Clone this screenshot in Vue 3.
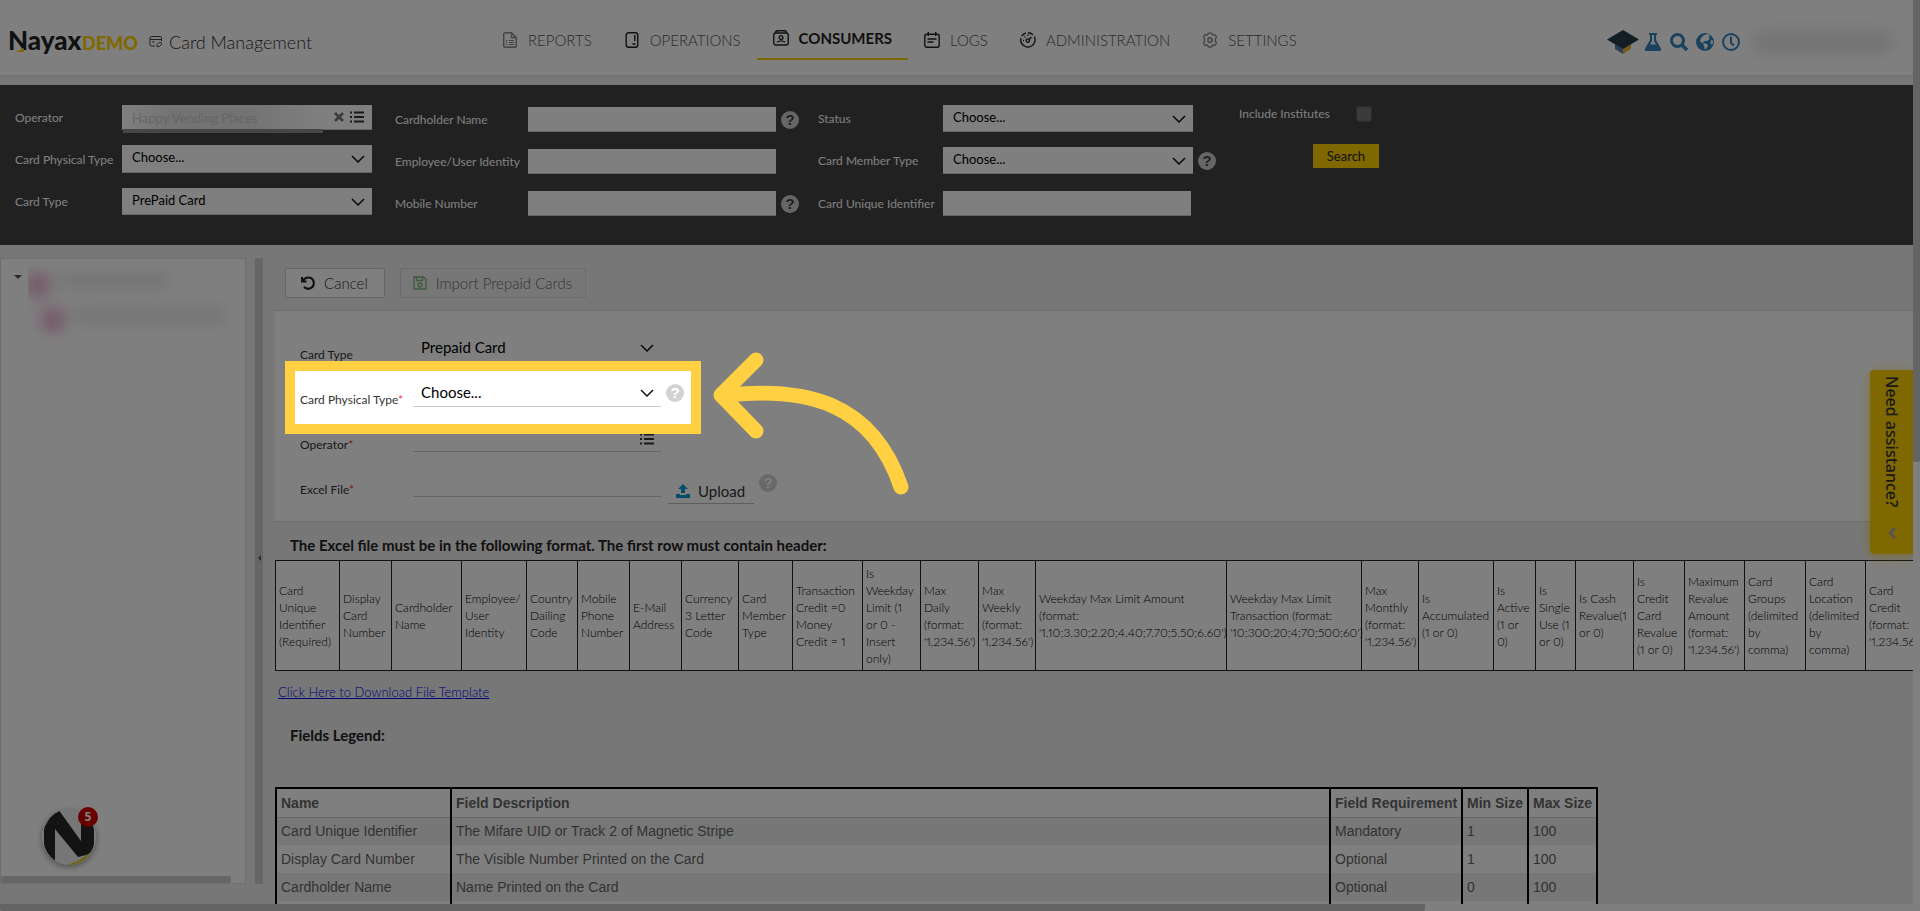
<script setup>
import { ref } from 'vue'

const nav = [
  { label: 'REPORTS', icon: 'report', tone: 'soft' },
  { label: 'OPERATIONS', icon: 'device', tone: 'strong' },
  { label: 'CONSUMERS', icon: 'badge', tone: 'strong', active: true },
  { label: 'LOGS', icon: 'log', tone: 'strong' },
  { label: 'ADMINISTRATION', icon: 'gauge', tone: 'strong' },
  { label: 'SETTINGS', icon: 'gear', tone: 'soft' },
]

const columns = [
  ['Card\nUnique\nIdentifier\n(Required)', 64],
  ['Display\nCard\nNumber', 52],
  ['Cardholder\nName', 70],
  ['Employee/\nUser\nIdentity', 65],
  ['Country\nDailing\nCode', 51],
  ['Mobile\nPhone\nNumber', 52],
  ['E-Mail\nAddress', 52],
  ['Currency\n3 Letter\nCode', 57],
  ['Card\nMember\nType', 54],
  ['Transaction\nCredit =0\nMoney\nCredit = 1', 70],
  ['Is\nWeekday\nLimit (1\nor 0 -\nInsert\nonly)', 58],
  ["Max\nDaily\n(format:\n'1,234.56')", 58],
  ["Max\nWeekly\n(format:\n'1,234.56')", 57],
  ["Weekday Max Limit Amount\n(format:\n'1.10;3.30;2.20;4.40;7.70;5.50;6.60')", 191],
  ["Weekday Max Limit\nTransaction (format:\n'10;300;20;4;70;500;60')", 135],
  ["Max\nMonthly\n(format:\n'1,234.56')", 57],
  ['Is\nAccumulated\n(1 or 0)', 75],
  ['Is\nActive\n(1 or\n0)', 42],
  ['Is\nSingle\nUse (1\nor 0)', 40],
  ['Is Cash\nRevalue(1\nor 0)', 58],
  ['Is\nCredit\nCard\nRevalue\n(1 or 0)', 51],
  ["Maximum\nRevalue\nAmount\n(format:\n'1,234.56')", 60],
  ['Card\nGroups\n(delimited\nby\ncomma)', 61],
  ['Card\nLocation\n(delimited\nby\ncomma)', 60],
  ["Card\nCredit\n(format:\n'1,234.56')", 60],
]
const totalWidth = columns.reduce((sum, c) => sum + c[1], 0)

const legend = [
  ['Card Unique Identifier', 'The Mifare UID or Track 2 of Magnetic Stripe', 'Mandatory', '1', '100'],
  ['Display Card Number', 'The Visible Number Printed on the Card', 'Optional', '1', '100'],
  ['Cardholder Name', 'Name Printed on the Card', 'Optional', '0', '100'],
]

const operator = ref('Happy Vending Places')
const includeInstitutes = ref(false)
</script>

<template>
  <div class="page">
    <header class="top">
      <div class="brand">
        <a class="logo" href="#" aria-label="Nayax Demo">
          <span class="logo-name">Nayax</span><span class="logo-demo">DEMO</span>
          <svg class="logo-mark" viewBox="0 0 8 4" aria-hidden="true"><path d="M0 4 L8 0 V4Z" fill="#ffd000" /></svg>
        </a>
        <svg class="card-icon" viewBox="0 0 14 14" fill="none" stroke="#444" aria-hidden="true">
          <path d="M6 11H2.500Q1 11 1 9.500V3Q1 1.500 2.500 1.500H11Q12.500 1.500 12.500 3V6M1 4.500H12.500M3 7H5.500" />
          <path d="M8 11.500V9.500L11 7L13 8.500L10.500 11.500Z" />
        </svg>
        <h1>Card Management</h1>
      </div>
      <nav class="nav">
        <a v-for="n in nav" :key="n.label" href="#" :class="['nav-item', n.tone, { active: n.active }]">
          <svg viewBox="0 0 16 16" fill="none" stroke="currentColor" stroke-width="1.4" aria-hidden="true">
            <template v-if="n.icon === 'report'">
              <path d="M9 .7H3.500Q1.700 .7 1.700 2.500V13.500Q1.700 15.300 3.500 15.300H12.500Q14.300 15.300 14.300 13.500V5.500L9.500 .7V5.500H14.300" />
              <path d="M4 8.500H5.500M7 8.500H12M4 10.500H5.500M7 10.500H12M4 12.500H5.500M7 12.500H12" stroke-width="1" />
            </template>
            <template v-else-if="n.icon === 'device'">
              <rect x="2.200" y=".8" width="11.600" height="14.400" rx="2.500" />
              <path d="M10.800 3V9M8.500 12H11.500" />
            </template>
            <template v-else-if="n.icon === 'badge'">
              <rect x=".8" y="3" width="14.400" height="12" rx="2" />
              <path d="M2.500 3Q2.500 .8 4.500 .8H11.500Q13.500 .8 13.500 3M4 12.300Q8 9.500 12 12.300" />
              <circle cx="8" cy="7.500" r="1.900" />
            </template>
            <template v-else-if="n.icon === 'log'">
              <rect x=".8" y="2.300" width="14.400" height="13" rx="2" />
              <path d="M4.300 0V4M11.700 0V4M3.500 7H12.500M3.500 10H9.500" />
            </template>
            <template v-else-if="n.icon === 'gauge'">
              <path d="M4.500 14A7.200 7.200 0 0 1 1 6M1.800 4.200A7.200 7.200 0 0 1 6 1M8 .8A7.200 7.200 0 0 1 13 2.800M14.300 4.500A7.200 7.200 0 0 1 11.500 14M4.500 14Q8 16.200 11.500 14" />
              <circle cx="7.800" cy="8.600" r="1.700" />
              <path d="M9 7.400L11.500 5M3 8.500H4M8 2.500V4M4.500 4.500L5.300 5.300" />
            </template>
            <template v-else>
              <circle cx="8" cy="8" r="2.200" />
              <path d="M5.800 2.500Q5.800 .9 8 .9T10.200 2.500Q11.500 3.300 12.600 2.600Q14 3 14.500 5.300Q13.300 6.300 13.300 8T14.500 10.700Q14 13 12.600 13.400Q11.500 12.700 10.200 13.500Q10.200 15.100 8 15.100T5.800 13.500Q4.500 12.700 3.400 13.400Q2 13 1.500 10.700Q2.700 9.700 2.700 8T1.500 5.300Q2 3 3.400 2.600Q4.500 3.300 5.800 2.500Z" />
            </template>
          </svg>
          <span>{{ n.label }}</span>
        </a>
      </nav>
      <div class="tools">
        <button type="button" class="tool cap" aria-label="Academy">
          <svg viewBox="0 0 32 24"><path d="M8 13L16 19V24L8 19Z" fill="#5a7ea8" /><path d="M24 13L16 19V24L24 19Z" fill="#e8b83a" /><path d="M16 0L32 9.500L16 19L0 9.500Z" fill="#263d49" /></svg>
        </button>
        <button type="button" class="tool" aria-label="Lab">
          <svg viewBox="0 0 18 18"><path fill-rule="evenodd" d="M5 0H13V2H12V7L17 15.500Q17.500 18 15.500 18H2.500Q.5 18 1 15.500L6 7V2H5ZM8 2V8L6 11.500H12L10 8V2Z" fill="#3384bd" /></svg>
        </button>
        <button type="button" class="tool" aria-label="Search">
          <svg viewBox="0 0 18 18" fill="none" stroke="#3384bd"><circle cx="7.500" cy="7.500" r="6" stroke-width="3" /><path d="M12 12L17 17" stroke-width="3.500" /></svg>
        </button>
        <button type="button" class="tool" aria-label="Language">
          <svg viewBox="0 0 18 18"><circle cx="9" cy="9" r="9" fill="#3384bd" /><path d="M8 2L12 1L14 3L12.500 5L14 6L11 8L9 8L6 10L4 8L5 5ZM15 7L17.500 8L16 12L14.500 10ZM7 10L11 11L12 13L9 17L8 13Z" fill="#fff" /></svg>
        </button>
        <button type="button" class="tool" aria-label="Recent">
          <svg viewBox="0 0 18 18" fill="none" stroke="#3384bd"><circle cx="9" cy="9" r="8" stroke-width="2" /><path d="M9 3.500V10L12 12.500" stroke-width="2" /></svg>
        </button>
        <div class="user-blur"></div>
      </div>
    </header>

    <form class="filters" @submit.prevent>
      <div class="fcol first">
        <div class="frow">
          <label for="f-op">Operator</label>
          <div class="box short">
            <input id="f-op" v-model="operator" class="masked" type="text">
            <span class="smear"></span>
            <div class="box-tools">
              <button type="button" aria-label="Clear"><svg viewBox="0 0 10 10"><path d="M1 1L9 9M9 1L1 9" stroke="#777" stroke-width="2.500" /></svg></button>
              <button type="button" aria-label="List"><svg class="list" viewBox="0 0 14 12"><path d="M0 1.500H2M0 6H2M0 10.500H2M4 1.500H14M4 6H14M4 10.500H14" stroke="#333" stroke-width="1.800" /></svg></button>
            </div>
          </div>
        </div>
        <div class="frow">
          <label for="f-phys">Card Physical Type</label>
          <div class="box tall"><select id="f-phys"><option>Choose...</option></select><svg class="chev" viewBox="0 0 14 8"><path d="M1 1L7 7L13 1" /></svg></div>
        </div>
        <div class="frow">
          <label for="f-type">Card Type</label>
          <div class="box"><select id="f-type"><option>PrePaid Card</option></select><svg class="chev" viewBox="0 0 14 8"><path d="M1 1L7 7L13 1" /></svg></div>
        </div>
      </div>

      <div class="fcol second">
        <div class="frow">
          <label for="f-name">Cardholder Name</label><input id="f-name" class="plain" type="text">
          <button type="button" class="help" aria-label="Help">?</button>
        </div>
        <div class="frow"><label for="f-emp">Employee/User Identity</label><input id="f-emp" class="plain" type="text"></div>
        <div class="frow">
          <label for="f-mob">Mobile Number</label><input id="f-mob" class="plain" type="text">
          <button type="button" class="help" aria-label="Help">?</button>
        </div>
      </div>

      <div class="fcol third">
        <div class="frow">
          <label for="f-status">Status</label>
          <div class="box"><select id="f-status"><option>Choose...</option></select><svg class="chev" viewBox="0 0 14 8"><path d="M1 1L7 7L13 1" /></svg></div>
        </div>
        <div class="frow">
          <label for="f-member">Card Member Type</label>
          <div class="box"><select id="f-member"><option>Choose...</option></select><svg class="chev" viewBox="0 0 14 8"><path d="M1 1L7 7L13 1" /></svg></div>
          <button type="button" class="help" aria-label="Help">?</button>
        </div>
        <div class="frow last"><label for="f-uid">Card Unique Identifier</label><input id="f-uid" class="plain" type="text"></div>
      </div>

      <div class="fcol fourth">
        <div class="check-row">
          <label for="f-inst">Include Institutes</label>
          <input id="f-inst" v-model="includeInstitutes" type="checkbox">
        </div>
        <button type="submit" class="search">Search</button>
      </div>
    </form>

    <div class="body">
      <aside class="tree">
        <span class="caret"></span>
        <div class="tree-blur">
          <div class="smudge"><i></i><b></b></div>
          <div class="smudge child"><i></i><b></b></div>
        </div>
        <div class="tree-scroll"></div>
        <button type="button" class="chat" aria-label="Messages">
          <svg viewBox="0 0 54 56" aria-hidden="true">
            <defs><clipPath id="disc"><ellipse cx="27" cy="28" rx="26" ry="28" /></clipPath></defs>
            <g clip-path="url(#disc)">
              <rect width="54" height="56" fill="#ececec" />
              <path d="M2 0H16L39 32V14H52V44L36 48L13 20V56H2Z" fill="#262626" />
              <path d="M24 56Q38 53 52 40V56Z" fill="#e8c01a" />
            </g>
          </svg>
          <span class="count">5</span>
        </button>
      </aside>
      <div class="splitter"><span></span></div>

      <main class="content">
        <div class="actions">
          <button type="button" class="act">
            <svg viewBox="0 0 14 14" fill="none" stroke="#222" stroke-width="2.200"><path d="M1 1V5.500H5.500M1.500 5Q4 1.200 8 1.500Q12.800 2.500 12.800 7T8 12.800Q5 13 3 11" /></svg>
            Cancel
          </button>
          <button type="button" class="act" disabled>
            <svg viewBox="0 0 14 14" fill="none" stroke="#4f9c4f" stroke-width="1.300"><path d="M1 1H10.500L13 3.500V13H1ZM3.500 1V4.500H9.500V1" /><circle cx="7" cy="9" r="2" /></svg>
            Import Prepaid Cards
          </button>
        </div>

        <form class="panel" @submit.prevent>
          <div class="prow">
            <label for="p-type">Card Type</label>
            <div class="line"><select id="p-type"><option>Prepaid Card</option></select><svg class="chev" viewBox="0 0 14 8"><path d="M1 1L7 7L13 1" /></svg></div>
          </div>
          <div class="prow">
            <label for="p-phys">Card Physical Type<em>*</em></label>
            <div class="line"><select id="p-phys"><option>Choose...</option></select><svg class="chev" viewBox="0 0 14 8"><path d="M1 1L7 7L13 1" /></svg></div>
            <button type="button" class="help pale" aria-label="Help">?</button>
            <div class="spotlight"></div>
            <svg class="arrow" viewBox="0 0 210 150" fill="none" stroke="#ffd041" stroke-width="15" stroke-linecap="round" stroke-linejoin="round" aria-hidden="true">
              <path d="M49 13L14 48L49 84M20 48C98 40 165 54 194 140" />
            </svg>
          </div>
          <div class="prow">
            <label for="p-op">Operator<em>*</em></label>
            <div class="line">
              <input id="p-op" type="text">
              <svg class="chev list" viewBox="0 0 14 12"><path d="M0 1.500H2M0 6H2M0 10.500H2M4 1.500H14M4 6H14M4 10.500H14" /></svg>
            </div>
          </div>
          <div class="prow">
            <label for="p-file">Excel File<em>*</em></label>
            <div class="line"><input id="p-file" type="text"></div>
            <button type="button" class="upload">
              <svg viewBox="0 0 14 14" fill="#0a9bd0"><path d="M7 0L12 5H9V9H5V5H2ZM0 10H4V11H10V10H14V14H0Z" /></svg>
              Upload
            </button>
            <button type="button" class="help pale" aria-label="Help">?</button>
          </div>
        </form>

        <h2>The Excel file must be in the following format. The first row must contain header:</h2>
        <div class="clip">
          <table class="format" :style="{ width: totalWidth + 'px' }">
            <colgroup><col v-for="(c, i) in columns" :key="i" :style="{ width: c[1] + 'px' }"></colgroup>
            <tbody><tr><td v-for="(c, i) in columns" :key="i">{{ c[0] }}</td></tr></tbody>
          </table>
        </div>
        <a class="download" href="#">Click Here to Download File Template</a>
        <h2 class="legend-title">Fields Legend:</h2>
        <table class="legend">
          <thead>
            <tr><th class="w-name">Name</th><th>Field Description</th><th class="w-req">Field Requirement</th><th class="w-min">Min Size</th><th class="w-max">Max Size</th></tr>
          </thead>
          <tbody>
            <tr v-for="row in legend" :key="row[0]"><td v-for="(cell, i) in row" :key="i">{{ cell }}</td></tr>
            <tr><td v-for="i in 5" :key="i"></td></tr>
          </tbody>
        </table>
      </main>
    </div>

    <button type="button" class="assist">
      <span>Need assistance?</span>
      <svg viewBox="0 0 8 12" fill="none" stroke="#aaa" stroke-width="2.500"><path d="M7 1L2 6L7 11" /></svg>
    </button>
    <div class="bar vertical"><span></span></div>
    <div class="bar horizontal"><span></span></div>
  </div>
</template>

<style>
body { margin: 0; }
</style>

<style scoped>
* { box-sizing: border-box; }
.page {
  position: relative;
  display: flex;
  flex-direction: column;
  height: 100vh;
  overflow: hidden;
  padding-right: 7px;
  background: #eee;
  color: #333;
  font-family: Lato, "Open Sans", sans-serif;
  font-size: 13px;
}
button, input, select { font: inherit; color: inherit; margin: 0; }
button { padding: 0; border: 0; background: none; }
select { appearance: none; }
svg { display: block; }
a { color: inherit; text-decoration: none; }

.top {
  flex: none;
  display: grid;
  grid-template-columns: 486px 1fr auto;
  height: 76px;
  margin-bottom: 9px;
  background: #fff;
  border-bottom: 1px solid #e4e4e4;
}
.brand { display: flex; align-items: center; padding: 8px 0 0 8px; }
.logo { position: relative; display: flex; align-items: baseline; line-height: 26px; }
.logo-name { width: 74px; color: #222; font-size: 26px; font-weight: 900; }
.logo-demo { width: 67px; color: #ffd000; font-size: 18px; font-weight: 900; }
.logo-mark { position: absolute; left: 8px; bottom: 4px; width: 8px; height: 4px; }
.card-icon { width: 14px; height: 14px; }
h1 { margin: 0 0 0 6px; font-size: 18px; font-weight: 300; }
.nav { display: flex; align-items: flex-start; padding-top: 18px; }
.nav-item {
  display: flex;
  align-items: center;
  gap: 10px;
  height: 42px;
  padding: 1px 16px 0;
  color: #555;
  font-size: 15px;
  font-weight: 300;
}
.nav-item svg { width: 16px; height: 16px; color: #222; }
.nav-item.soft svg { color: #888; }
.nav-item.active { padding-top: 0; border-bottom: 2px solid #ffd000; color: #222; font-weight: 700; }
.tools { display: flex; align-items: center; gap: 8px; padding: 9px 8px 0 0; }
.tool svg { width: 18px; height: 18px; }
.tool.cap { margin-right: -3px; }
.cap svg { width: 32px; height: 24px; }
.user-blur { width: 136px; height: 12px; margin: 0 14px 0 7px; background: #d0d0d0; filter: blur(9px); }

.filters {
  flex: none;
  display: flex;
  height: 160px;
  padding: 20px 0 0 15px;
  background: #424242;
  color: #fff;
  font-size: 12px;
}
.fcol { display: flex; flex-direction: column; gap: 15px; }
.frow { display: flex; align-items: center; }
.frow label { flex: none; white-space: nowrap; }
.first .frow label { width: 107px; }
.second { gap: 17px; padding-top: 2px; margin-left: 23px; }
.second .frow label { width: 133px; }
.second { width: 423px; }
.third .frow label { width: 125px; }
.third .last { padding-top: 2px; }
.third { width: 421px; }
.box {
  position: relative;
  width: 250px;
  height: 27px;
  background: #fff;
  border-bottom: 1px solid #ccc;
  color: #000;
}
.box.short { height: 25px; }
.box.tall { height: 28px; }
.box select, .box input {
  display: block;
  width: 100%;
  height: 100%;
  padding: 0 30px 3px 10px;
  border: 0;
  border-radius: 0;
  background: transparent;
  font-size: 13px;
}
.box .masked { color: #ccc; padding-top: 5px; background: linear-gradient(90deg, #fff, #e6e6e6 20%, #e6e6e6 50%, #fff 80%); }
.smear { position: absolute; left: 1px; right: 49px; top: 24px; height: 4px; background: #8c8c8c; }
.box-tools { position: absolute; right: 8px; top: 6px; display: flex; align-items: center; gap: 6px; }
.box-tools svg { width: 10px; height: 12px; }
.box-tools .list { width: 14px; }
.chev {
  position: absolute;
  right: 7px;
  top: 10px;
  width: 14px;
  height: 8px;
  fill: none;
  stroke: #111;
  stroke-width: 1.5;
  pointer-events: none;
}
.plain { width: 248px; height: 25px; padding: 0 8px; border: 0; border-bottom: 1px solid #ccc; background: #fff; color: #222; }
.help {
  width: 18px;
  height: 18px;
  margin-left: 5px;
  border-radius: 50%;
  background: #ccc;
  color: #424242;
  font-family: "Liberation Sans", sans-serif;
  font-size: 15px;
  font-weight: 700;
  line-height: 18px;
}
.help.pale { background: #d2d2d2; color: #fff; }
.fourth { gap: 22px; width: 140px; }
.check-row { display: flex; align-items: center; justify-content: space-between; padding-right: 7px; height: 17px; }
.check-row input { appearance: none; width: 16px; height: 16px; border: 1px solid #555; border-radius: 3px; background: #757575; }
.search { align-self: flex-end; width: 66px; height: 24px; background: #ffd000; color: #222; font-size: 13px; }

.body { flex: 1; display: flex; min-height: 0; padding-top: 13px; }
.tree {
  position: relative;
  flex: none;
  display: flex;
  flex-direction: column;
  width: 246px;
  margin-bottom: 27px;
  padding: 12px 0 0 13px;
  background: #fff;
  border: 1px solid #ddd;
}
.caret { width: 0; margin-top: 4px; border: 4px solid transparent; border-top-color: #555; }
.tree-blur { flex: 1; margin: -18px 0 0 14px; padding-top: 2px; overflow: hidden; }
.smudge { display: flex; align-items: center; gap: 12px; height: 35px; filter: blur(8px); }
.smudge i { width: 20px; height: 20px; background: #e39cc6; }
.smudge b { width: 110px; height: 12px; margin-bottom: 10px; background: #e0e0e0; }
.smudge.child { padding-left: 15px; }
.smudge.child b { width: 150px; }
.tree-scroll { width: 230px; height: 7px; margin-left: -13px; border-radius: 2px; background: #ccc; }
.chat { position: absolute; left: 41px; bottom: 18px; width: 54px; height: 56px; border-radius: 50%; box-shadow: 0 2px 6px #0006; }
.chat svg { width: 54px; height: 56px; }
.count {
  position: absolute;
  right: -2px;
  top: -2px;
  width: 20px;
  height: 20px;
  border-radius: 50%;
  background: #d00000;
  color: #fff;
  font: 700 12px/20px "Noto Sans", sans-serif;
  text-align: center;
}
.splitter { flex: none; display: flex; align-items: center; justify-content: center; width: 8px; margin: 0 12px 27px 9px; padding-bottom: 26px; background: #ccc; }
.splitter span { border: 3px solid transparent; border-left: 0; border-right-color: #555; }

.content { flex: 1; min-width: 0; }
.actions { display: flex; gap: 15px; padding: 10px 10px 12px; }
.act {
  display: flex;
  align-items: center;
  gap: 9px;
  height: 30px;
  padding: 0 16px 0 15px;
  border: 1px solid #ccc;
  border-radius: 2px;
  background: #fff;
  font-size: 15px;
  font-weight: 300;
}
.act svg { width: 14px; height: 14px; }
.act:disabled { padding: 0 13px 0 12px; background: transparent; border-color: #d8d8d8; color: #666; }
.act:disabled svg { opacity: .7; }

.panel {
  height: 212px;
  padding: 24px 0 0 25px;
  background: #fff;
  border: solid #ddd;
  border-width: 1px 0;
}
.prow { position: relative; display: flex; align-items: flex-start; height: 45px; }
.prow label { width: 113px; padding-top: 12px; font-size: 12px; line-height: 16px; }
.prow em { color: #f33; font-style: normal; }
.line { position: relative; width: 248px; height: 27px; border-bottom: 1px solid #ccc; color: #000; }
.line select, .line input {
  display: block;
  width: 100%;
  height: 26px;
  padding: 0 30px 2px 8px;
  border: 0;
  background: transparent;
  font-size: 15px;
}
.line .chev { top: 9px; }
.line .list { top: 8px; height: 12px; stroke: #333; stroke-width: 1.8; }
.pale { margin-top: 4px; }
.upload {
  display: flex;
  align-items: center;
  gap: 8px;
  width: 86px;
  height: 26px;
  margin: 8px 0 0 7px;
  padding-left: 8px;
  border-bottom: 1px solid #bbb;
  font-size: 15px;
}
.upload svg { width: 14px; height: 14px; }
.spotlight {
  position: absolute;
  z-index: 10;
  left: -15px;
  top: -19px;
  width: 416px;
  height: 73px;
  border: 10px solid #ffd041;
  box-shadow: 0 0 0 4000px rgba(0, 0, 0, .5);
  pointer-events: none;
}
.arrow { position: absolute; z-index: 11; left: 407px; top: -33px; width: 210px; height: 150px; pointer-events: none; }

h2 { margin: 0; padding: 13px 15px 0; color: #222; font-size: 15px; font-weight: 700; line-height: 20px; height: 38px; }
.clip { overflow: hidden; }
.format { border-collapse: collapse; table-layout: fixed; background: #fff; color: #000; }
.format td {
  height: 110px;
  padding: 0 3px;
  border: 1px solid #222;
  white-space: pre;
  font-size: 12px;
  font-weight: 300;
  font-variant-numeric: proportional-nums;
  line-height: 17px;
  vertical-align: middle;
}
.download { display: inline-block; margin: 12px 3px 0; color: #00e; font-size: 13px; font-weight: 300; line-height: 18px; text-decoration: underline; }
.legend-title { height: 86px; padding-top: 24px; }
.legend {
  width: 1323px;
  table-layout: fixed;
  border-collapse: collapse;
  border: 2px solid #000;
  background: #fff;
  color: #666;
  font-family: "Liberation Sans", Arial, sans-serif;
  font-size: 14px;
}
.legend th, .legend td { height: 28px; padding: 0 4px; border: solid #000; border-width: 0 2px; text-align: left; white-space: nowrap; }
.legend th { height: 29px; border-bottom: 1px solid #ccc; }
.legend tbody tr:nth-child(odd) { background: #eee; }
.w-name { width: 175px; }
.w-req { width: 132px; }
.w-min { width: 66px; }
.w-max { width: 69px; }

.assist {
  position: absolute;
  right: 7px;
  top: 370px;
  display: flex;
  flex-direction: column;
  align-items: center;
  width: 43px;
  height: 184px;
  padding-top: 6px;
  border-radius: 4px 0 0 4px;
  background: #ffd000;
  box-shadow: 0 2px 12px #ffd00099;
  color: #333;
}
.assist span { writing-mode: vertical-rl; font: 500 16px/20px "Noto Sans", sans-serif; }
.assist svg { width: 8px; height: 12px; margin-top: 20px; }
.bar { position: absolute; z-index: 5; background: #fff; }
.bar span { display: block; background: #c8c8c8; border-radius: 0 0 2px 2px; }
.vertical { right: 0; top: 0; bottom: 0; width: 7px; }
.vertical span { height: 51%; width: 7px; margin-top: -3px; }
.horizontal { left: 0; right: 7px; bottom: 0; height: 7px; }
.horizontal span { width: 74.5%; height: 7px; }
</style>
